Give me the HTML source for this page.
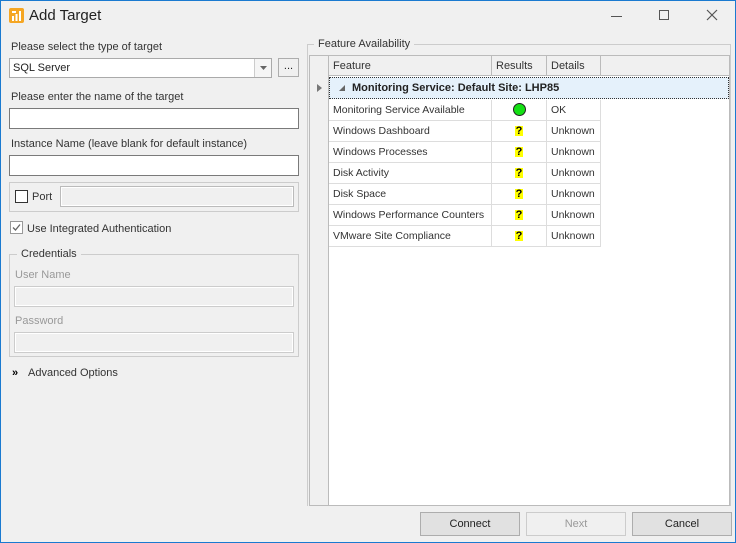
<!DOCTYPE html>
<html><head><style>
*{box-sizing:border-box;margin:0;padding:0}
body{width:736px;height:543px;background:#f0f0f0;font-family:"Liberation Sans",sans-serif;font-size:11px;color:#222;position:relative;overflow:hidden}
.frame{position:absolute;left:0;top:0;width:736px;height:543px;border:1px solid #1a7ad0;}
.a{position:absolute}
.lbl{position:absolute;font-size:11px;color:#333;margin-top:1px}
.inp{position:absolute;background:#fff;border:1px solid #7a7a7a}
.dis{position:absolute;background:#f0f0f0;border:1px solid #ccc;box-shadow:inset 0 0 0 1px #fff}
.btn{position:absolute;border:1px solid #adadad;background:#e1e1e1;text-align:center;line-height:23px;font-size:11px}
.cell{position:absolute;height:21px;line-height:21px;border-right:1px solid #ddd;border-bottom:1px solid #ddd;padding-left:4px;white-space:nowrap;color:#333;font-size:10.5px;overflow:hidden}
.cell b{color:#000;background:#ff0;font-size:11px;line-height:10px;display:inline-block;padding:0 1px;margin-top:5px}
</style></head><body>
<div class="frame"></div>
<svg class="a" style="left:9px;top:8px" width="15" height="15"><rect width="15" height="15" rx="2" fill="#f5a623"/><rect x="3" y="8" width="2" height="5" fill="#fff"/><rect x="6.5" y="6" width="2" height="7" fill="#fff"/><rect x="10" y="3" width="2" height="10" fill="#fff"/><rect x="3" y="3" width="4" height="2" fill="#fff"/></svg>
<div class="a" style="left:29px;top:7px;font-size:15px;color:#222">Add Target</div>
<div class="a" style="left:611px;top:16px;width:11px;height:1px;background:#555"></div>
<div class="a" style="left:659px;top:10px;width:10px;height:10px;border:1px solid #555"></div>
<svg class="a" style="left:706px;top:9px" width="12" height="12"><path d="M1 1L11 11M11 1L1 11" stroke="#555" stroke-width="1.2"/></svg>

<div class="lbl" style="left:11px;top:40px">Please select the type of target</div>
<div class="inp" style="left:9px;top:58px;width:263px;height:20px;border-color:#aaa"><span style="position:absolute;left:3px;top:3px">SQL Server</span><div style="position:absolute;right:0;top:0;width:17px;height:18px;border-left:1px solid #ccc;background:#f5f5f5"><svg style="position:absolute;left:5px;top:7px" width="7" height="4"><path d="M0 0H7L3.5 4Z" fill="#666"/></svg></div></div>
<div class="a" style="left:278px;top:58px;width:21px;height:19px;border:1px solid #adadad;background:#f0f0f0;text-align:center;line-height:14px">...</div>
<div class="lbl" style="left:11px;top:90px">Please enter the name of the target</div>
<div class="inp" style="left:9px;top:108px;width:290px;height:21px"></div>
<div class="lbl" style="left:11px;top:137px">Instance Name (leave blank for default instance)</div>
<div class="inp" style="left:9px;top:155px;width:290px;height:21px"></div>
<div class="a" style="left:9px;top:182px;width:290px;height:30px;border:1px solid #ccc"></div>
<div class="a" style="left:15px;top:190px;width:13px;height:13px;border:1px solid #333;background:#fff"></div>
<div class="lbl" style="left:32px;top:190px">Port</div>
<div class="dis" style="left:60px;top:186px;width:234px;height:21px;border-color:#bbb"></div>
<div class="a" style="left:10px;top:221px;width:13px;height:13px;border:1px solid #999;background:#fff"><svg width="11" height="11"><path d="M2 5.5L4.5 8L9 2.5" stroke="#666" stroke-width="1.3" fill="none"/></svg></div>
<div class="lbl" style="left:27px;top:222px">Use Integrated Authentication</div>
<div class="a" style="left:9px;top:254px;width:290px;height:103px;border:1px solid #ccc"></div>
<div class="lbl" style="left:17px;top:247px;background:#f0f0f0;padding:0 4px">Credentials</div>
<div class="lbl" style="left:15px;top:268px;color:#999">User Name</div>
<div class="dis" style="left:14px;top:286px;width:280px;height:21px"></div>
<div class="lbl" style="left:15px;top:314px;color:#999">Password</div>
<div class="dis" style="left:14px;top:332px;width:280px;height:21px"></div>
<div class="lbl" style="left:12px;top:366px;font-weight:bold;color:#000;font-size:11px">»</div>
<div class="lbl" style="left:28px;top:366px">Advanced Options</div>

<div class="a" style="left:307px;top:44px;width:1px;height:462px;background:#ccc"></div>
<div class="a" style="left:307px;top:44px;width:424px;height:1px;background:#ccc"></div>
<div class="a" style="left:730px;top:44px;width:1px;height:462px;background:#ccc"></div>
<div class="lbl" style="left:314px;top:37px;background:#f0f0f0;padding:0 4px">Feature Availability</div>
<div class="a" style="left:309px;top:55px;width:421px;height:451px;background:#fff;border:1px solid #bbb"></div>
<div class="a" style="left:310px;top:56px;width:419px;height:20px;background:#f0f0f0;border-bottom:1px solid #bbb"></div>
<div class="a" style="left:310px;top:56px;width:19px;height:449px;background:#f0f0f0;border-right:1px solid #bbb"></div>
<div class="a" style="left:491px;top:56px;width:1px;height:20px;background:#bbb"></div>
<div class="a" style="left:546px;top:56px;width:1px;height:20px;background:#bbb"></div>
<div class="a" style="left:600px;top:56px;width:1px;height:20px;background:#bbb"></div>
<div class="lbl" style="left:333px;top:59px">Feature</div>
<div class="lbl" style="left:496px;top:59px">Results</div>
<div class="lbl" style="left:551px;top:59px">Details</div>
<svg class="a" style="left:317px;top:84px" width="5" height="8"><path d="M0 0L5 4L0 8Z" fill="#777"/></svg>
<div class="a" style="left:329px;top:77px;width:400px;height:22px;background:#e5f1fb;border:1px dotted #333"></div>
<svg class="a" style="left:339px;top:85px" width="6" height="6"><path d="M6 0V6H0Z" fill="#666"/></svg>
<div class="lbl" style="left:352px;top:81px;font-weight:bold;color:#222;font-size:11px">Monitoring Service: Default Site: LHP85</div>

<div class="cell" style="left:329px;top:100px;width:163px">Monitoring Service Available</div><div class="cell" style="left:492px;top:100px;width:55px"><span style="position:absolute;left:21px;top:3px;width:13px;height:13px;border-radius:50%;background:#14e014;border:1px solid #222"></span></div><div class="cell" style="left:547px;top:100px;width:54px">OK</div>
<div class="cell" style="left:329px;top:121px;width:163px">Windows Dashboard</div><div class="cell" style="left:492px;top:121px;width:55px;text-align:center;padding:0"><b>?</b></div><div class="cell" style="left:547px;top:121px;width:54px">Unknown</div>
<div class="cell" style="left:329px;top:142px;width:163px">Windows Processes</div><div class="cell" style="left:492px;top:142px;width:55px;text-align:center;padding:0"><b>?</b></div><div class="cell" style="left:547px;top:142px;width:54px">Unknown</div>
<div class="cell" style="left:329px;top:163px;width:163px">Disk Activity</div><div class="cell" style="left:492px;top:163px;width:55px;text-align:center;padding:0"><b>?</b></div><div class="cell" style="left:547px;top:163px;width:54px">Unknown</div>
<div class="cell" style="left:329px;top:184px;width:163px">Disk Space</div><div class="cell" style="left:492px;top:184px;width:55px;text-align:center;padding:0"><b>?</b></div><div class="cell" style="left:547px;top:184px;width:54px">Unknown</div>
<div class="cell" style="left:329px;top:205px;width:163px">Windows Performance Counters</div><div class="cell" style="left:492px;top:205px;width:55px;text-align:center;padding:0"><b>?</b></div><div class="cell" style="left:547px;top:205px;width:54px">Unknown</div>
<div class="cell" style="left:329px;top:226px;width:163px">VMware Site Compliance</div><div class="cell" style="left:492px;top:226px;width:55px;text-align:center;padding:0"><b>?</b></div><div class="cell" style="left:547px;top:226px;width:54px">Unknown</div>

<div class="btn" style="left:420px;top:512px;width:100px;height:24px">Connect</div>
<div class="btn" style="left:526px;top:512px;width:100px;height:24px;border-color:#ccc;background:#f0f0f0;color:#999">Next</div>
<div class="btn" style="left:632px;top:512px;width:100px;height:24px">Cancel</div>
</body></html>
